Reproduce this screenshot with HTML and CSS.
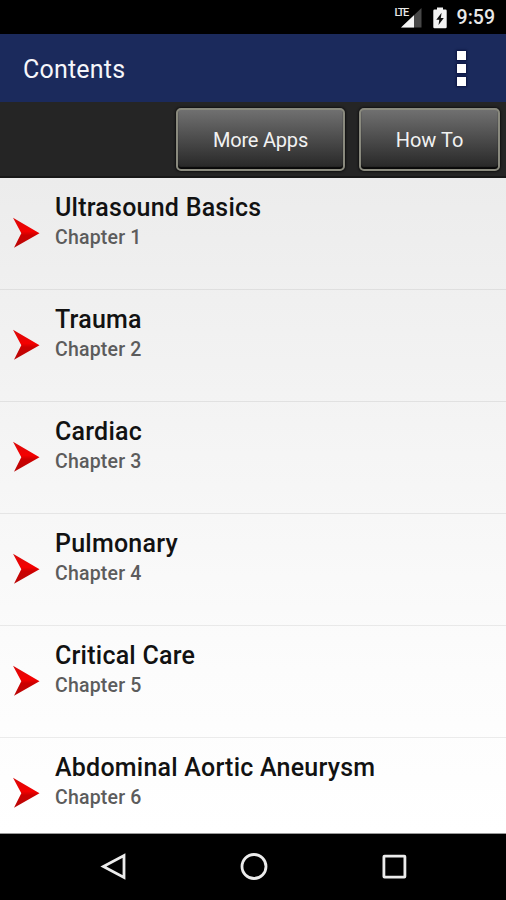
FILE: index.html
```html
<!doctype html>
<html lang="en">
<head>
<title>Contents</title>
<meta charset="utf-8">
<meta name="viewport" content="width=device-width, initial-scale=1">
<link rel="stylesheet" href="styles.css">
</head>
<body>
<!-- shared arrow for the chapter rows -->
<svg class="defs" width="0" height="0">
	<defs>
		<linearGradient id="red" x1="0" y1="0" x2="0" y2="1">
			<stop offset="0" stop-color="#d80c0c"/>
			<stop offset="0.45" stop-color="#f50000"/>
			<stop offset="0.58" stop-color="#cc0000"/>
			<stop offset="1" stop-color="#b80808"/>
		</linearGradient>
		<symbol id="arrow" viewBox="0 0 28 32">
			<path d="M1 0.8L27.5 16.2L2 30.8L9.3 16.2Z" fill="url(#red)"/>
		</symbol>
	</defs>
</svg>
<div class="status">
	<div class="signal">
		<span class="lte">LTE</span>
		<svg width="21" height="20" viewBox="0 0 21 20">
			<path d="M0 19.5L20.5 0V19.5Z" fill="#484848"/>
			<path d="M0 19.5L13 7.2V19.5Z" fill="#f4f4f4"/>
		</svg>
	</div>
	<svg class="battery" width="14" height="22" viewBox="0 0 14 22">
		<path d="M4 0.5H10V2.5H12.5Q13.7 2.5 13.7 3.7V20Q13.7 21.2 12.5 21.2H1.5Q0.3 21.2 0.3 20V3.7Q0.3 2.5 1.5 2.5H4Z" fill="#f4f4f4"/>
		<path d="M8.6 5.8L3.3 12.8H6.3L5.5 18L10.8 11H7.8Z" fill="#111"/>
	</svg>
	<span class="time">9:59</span>
</div>
<div class="header">
	<h1>Contents</h1>
	<div class="menu"><i></i><i></i><i></i></div>
</div>
<div class="toolbar">
	<button class="more" type="button">More Apps</button>
	<button class="how" type="button">How To</button>
</div>
<div class="list">
	<div class="row">
		<svg class="arrow"><use href="#arrow"/></svg>
		<div><h2>Ultrasound Basics</h2><p>Chapter 1</p></div>
	</div>
	<div class="row">
		<svg class="arrow"><use href="#arrow"/></svg>
		<div><h2>Trauma</h2><p>Chapter 2</p></div>
	</div>
	<div class="row">
		<svg class="arrow"><use href="#arrow"/></svg>
		<div><h2>Cardiac</h2><p>Chapter 3</p></div>
	</div>
	<div class="row">
		<svg class="arrow"><use href="#arrow"/></svg>
		<div><h2>Pulmonary</h2><p>Chapter 4</p></div>
	</div>
	<div class="row">
		<svg class="arrow"><use href="#arrow"/></svg>
		<div><h2>Critical Care</h2><p>Chapter 5</p></div>
	</div>
	<div class="row">
		<svg class="arrow"><use href="#arrow"/></svg>
		<div><h2>Abdominal Aortic Aneurysm</h2><p>Chapter 6</p></div>
	</div>
</div>
<div class="nav">
	<svg width="28" height="28" viewBox="0 0 28 28"><path d="M24 2.6V24.4L3.4 13.5Z"/></svg>
	<svg width="28" height="28" viewBox="0 0 28 28"><circle cx="14" cy="13.5" r="12"/></svg>
	<svg width="28" height="28" viewBox="0 0 28 28"><rect x="3.9" y="3.2" width="21" height="21" rx="0.6"/></svg>
</div>
</body>
</html>
```
FILE: styles.css
```css
	body {
		margin:0;
		width:506px;
		height:900px;
		overflow:hidden;
		display:flex;
		flex-direction:column;
		background:#000;
		font-family:Roboto, sans-serif;
	}
	h1, h2, p {
		margin:0;
	}
	.defs {
		position:absolute;
	}

	.status {
		height:34px;
		flex:none;
		display:flex;
		align-items:flex-start;
		justify-content:flex-end;
		padding-right:11px;
		box-sizing:border-box;
		color:#e8e8e8;
	}
	.signal {
		display:flex;
		padding-top:7.5px;
	}
	.lte {
		font-size:11px;
		font-weight:500;
		line-height:10px;
		letter-spacing:-1.4px;
		width:14px;
		margin-right:-8px;
		z-index:1;
	}
	.battery {
		margin:6.5px 10px 0 11px;
	}
	.time {
		font-size:19.5px;
		font-weight:500;
		line-height:36px;
	}

	.header {
		height:68px;
		flex:none;
		display:flex;
		align-items:center;
		justify-content:space-between;
		padding:0 40px 0 23px;
		box-sizing:border-box;
		background:#1b2a5c;
		color:#f6f6fa;
	}
	.header h1 {
		font-size:25px;
		font-weight:400;
		letter-spacing:0.2px;
		line-height:30px;
		padding-top:3px;
	}
	.menu {
		display:flex;
		flex-direction:column;
		gap:4px;
	}
	.menu i {
		width:9px;
		height:9px;
		background:#fff;
		box-shadow:0 0 2px 1px #0c1440;
	}

	.toolbar {
		height:76px;
		flex:none;
		display:flex;
		justify-content:flex-end;
		gap:14px;
		padding:6px 6px 0 0;
		box-sizing:border-box;
		background:#252525;
		border-bottom:2px solid #181818;
	}
	button {
		height:63px;
		border:2px solid #8a8a7e;
		border-radius:5px;
		background:linear-gradient(#707070, #262626);
		box-shadow:inset 0 -2px 1px #080808, 0 0 2px 1px #111;
		color:#f2f2f2;
		font-family:Roboto, sans-serif;
		font-size:20px;
		padding:1px 0 0 0;
	}
	.more {
		width:169px;
		letter-spacing:-0.2px;
	}
	.how {
		width:141px;
	}

	.list {
		height:656px;
		flex:none;
		overflow:hidden;
		box-sizing:border-box;
		background:linear-gradient(#ececec, #fcfcfc 75%, #fff);
		border-bottom:1px solid #999;
	}
	.row {
		height:112px;
		box-sizing:border-box;
		display:flex;
		border-bottom:1px solid rgba(0,0,0,0.07);
	}
	.arrow {
		width:28px;
		height:32px;
		margin:39px 15px 0 12px;
	}
	.row h2 {
		font-size:25px;
		font-weight:500;
		letter-spacing:0.23px;
		line-height:30px;
		padding-top:15px;
		color:#121212;
	}
	.row p {
		font-size:19.5px;
		font-weight:500;
		letter-spacing:0.2px;
		line-height:30px;
		color:#5c5c5c;
	}

	.nav {
		flex:1;
		display:flex;
		justify-content:space-between;
		align-items:center;
		padding:0 98px 0 100px;
	}
	.nav svg {
		fill:none;
		stroke:#ececec;
		stroke-width:2.8;
	}
```
